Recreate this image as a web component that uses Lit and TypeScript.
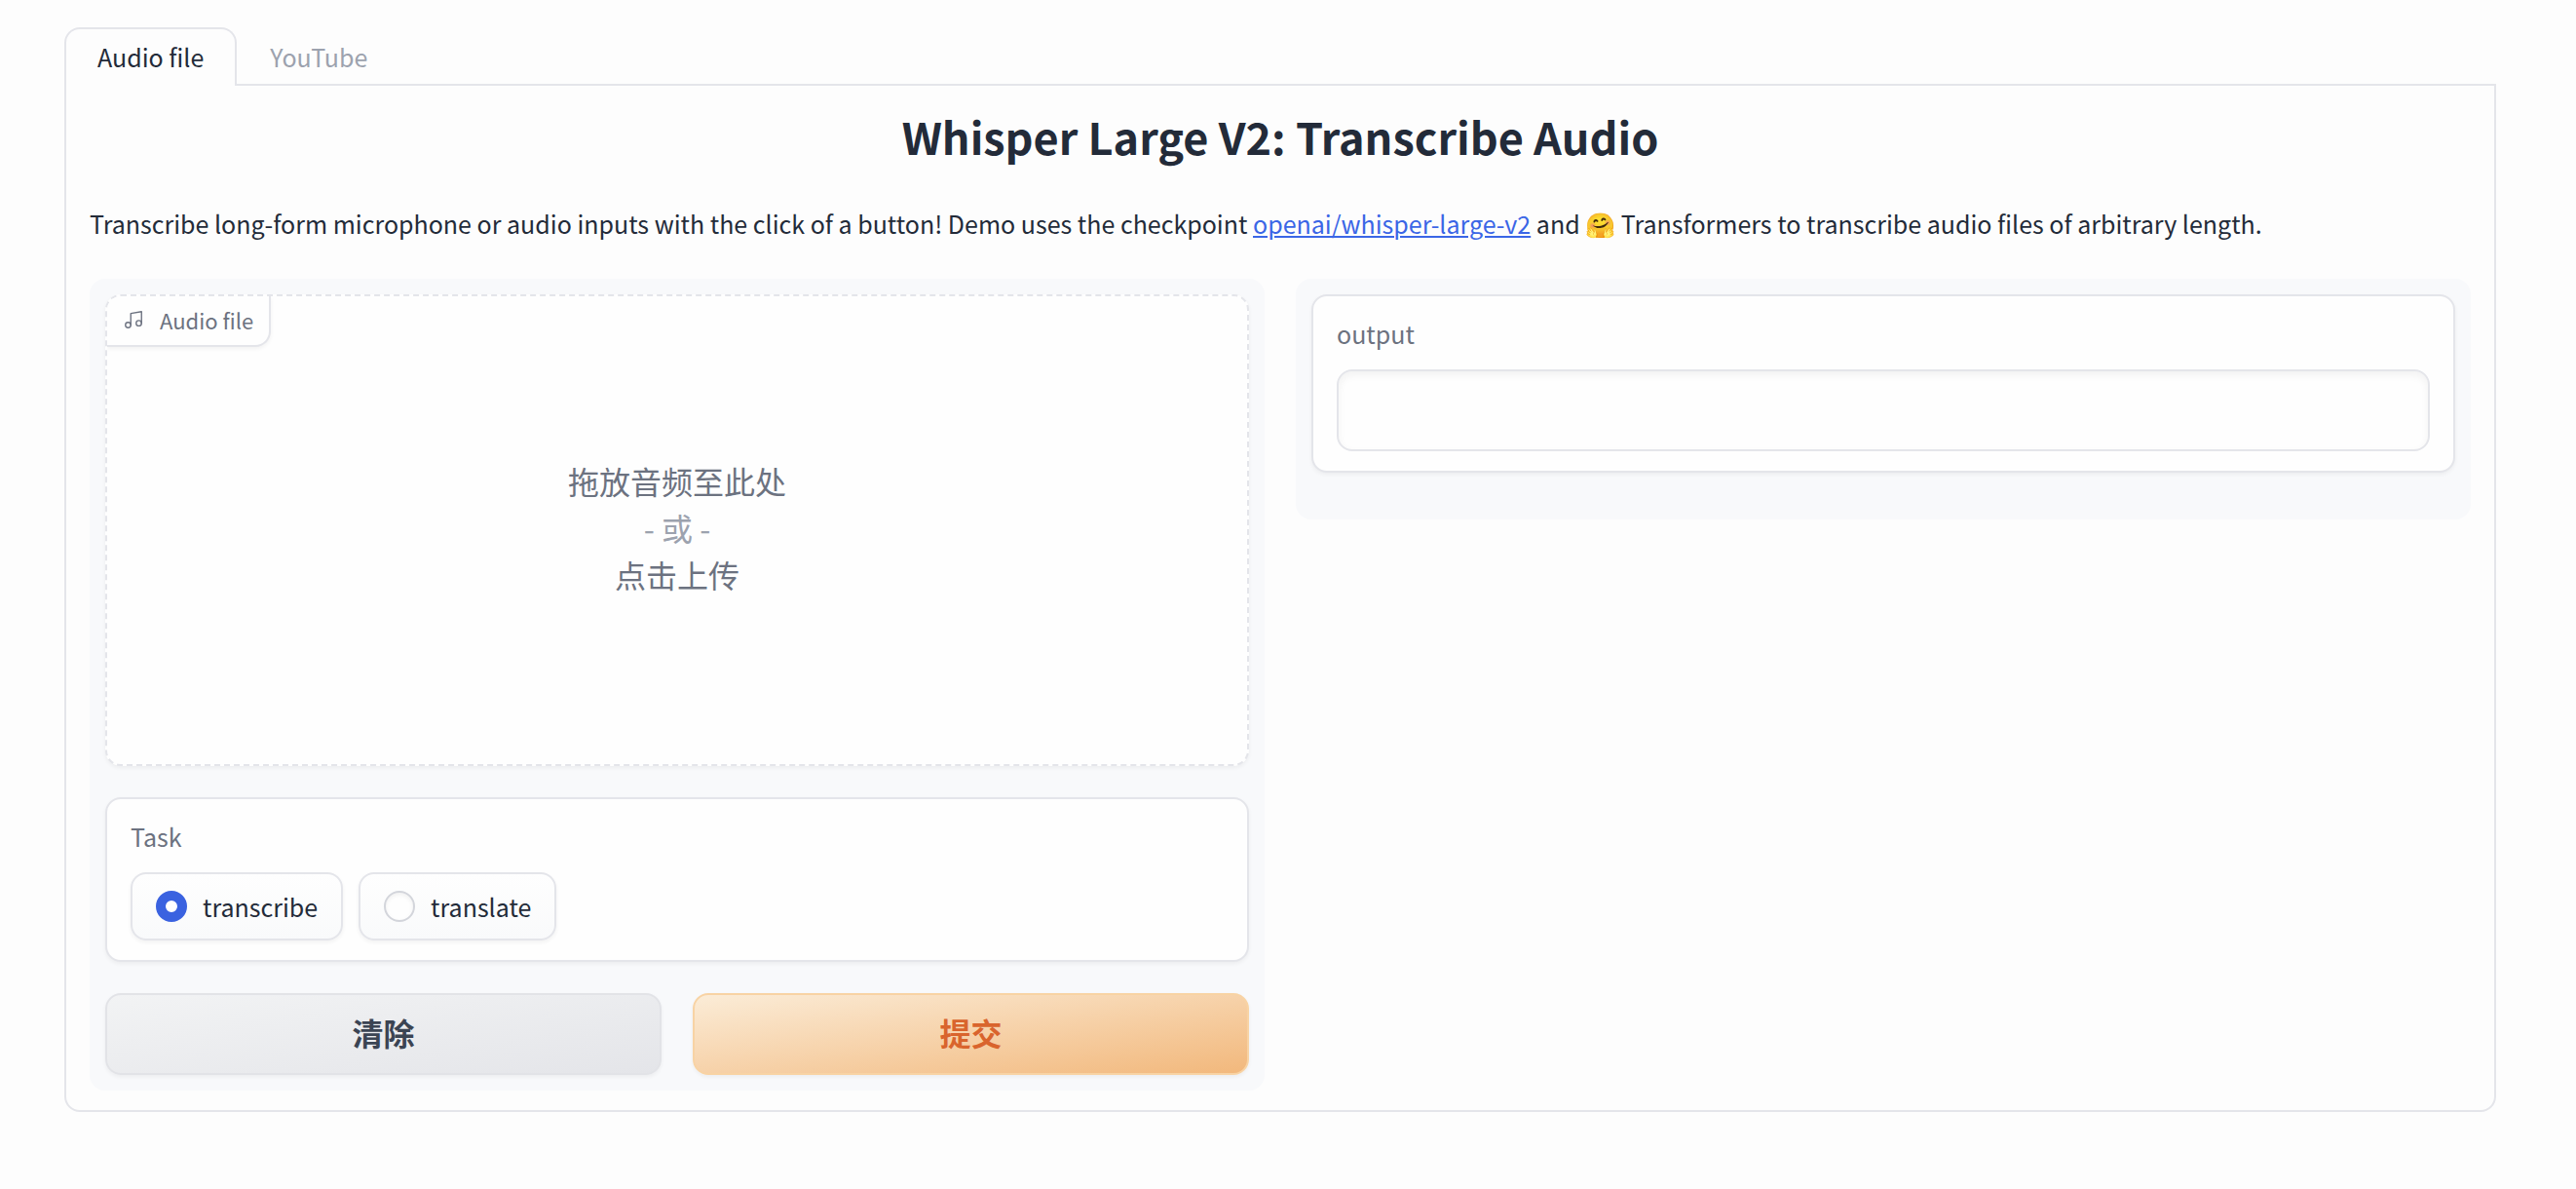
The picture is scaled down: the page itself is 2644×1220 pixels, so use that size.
import { LitElement, html, css, svg } from "lit";
import { customElement, state } from "lit/decorators.js";
import { classMap } from "lit/directives/class-map.js";

const TABS = ["Audio file", "YouTube"];
const TASKS = ["transcribe", "translate"];

const musicIcon = svg`
  <svg class="icon" viewBox="0 0 24 24" fill="none" stroke="currentColor" stroke-width="1.5"
    stroke-linecap="round" stroke-linejoin="round" aria-hidden="true">
    <path d="M9 18V5l12-2v13"></path>
    <circle cx="6" cy="18" r="3"></circle>
    <circle cx="18" cy="16" r="3"></circle>
  </svg>`;

@customElement("app-root")
export class AppRoot extends LitElement {
  @state() private tab = TABS[0];
  @state() private task = TASKS[0];

  static styles = css`
    :host {
      --line: #e4e5ea;
      --ink: #232b39;
      --muted: #6c7280;
      --faint: #9ca2ae;
      --card: #fefefe;
      --shadow: 0 2px 4px rgba(0, 0, 0, 0.05);
      display: block;
      box-sizing: border-box;
      min-height: 100vh;
      padding: 28px 82px 80px 66px;
      background: #fdfdfd;
      color: var(--ink);
      font-family: "Noto Sans CJK SC", sans-serif;
      font-size: 25px;
      line-height: 36px;
    }
    *,
    *::before {
      box-sizing: border-box;
    }
    button,
    input {
      font: inherit;
      color: inherit;
      margin: 0;
    }
    button {
      cursor: pointer;
    }
    .tabs {
      display: flex;
      position: relative;
      margin-bottom: -2px;
    }
    .tab {
      border: 2px solid transparent;
      border-bottom: 0;
      border-radius: 16px 16px 0 0;
      padding: 10px 32px 12px;
      background: transparent;
      color: var(--faint);
    }
    .tab.selected {
      border-color: var(--line);
      background: #fdfdfd;
      color: var(--ink);
    }
    .page {
      border: 2px solid var(--line);
      border-radius: 0 0 16px 16px;
      padding: 22px 24px 20px;
    }
    h1 {
      margin: 0 0 38px;
      font-size: 45px;
      line-height: 60px;
      font-weight: 700;
      text-align: center;
    }
    p {
      margin: 0 0 36px;
      line-height: 42px;
    }
    a {
      color: #3b66e6;
      text-decoration: underline;
      text-decoration-thickness: 2px;
      text-underline-offset: 2px;
    }
    .columns {
      display: grid;
      grid-template-columns: 1fr 1fr;
      align-items: start;
      gap: 32px;
    }
    .column {
      display: flex;
      flex-direction: column;
      gap: 32px;
      padding: 16px;
      border-radius: 16px;
      background: #f8f9fb;
    }
    .column.result {
      padding-bottom: 48px;
    }
    .block {
      margin: 0;
      border: 2px solid var(--line);
      border-radius: 16px;
      padding: 20px 24px;
      background: var(--card);
      box-shadow: var(--shadow);
      min-width: 0;
    }
    .block.upload {
      position: relative;
      padding: 0;
      border-style: dashed;
      overflow: hidden;
    }
    .tag {
      position: absolute;
      top: 0;
      left: 0;
      display: flex;
      align-items: center;
      gap: 16px;
      padding: 8px 16px 10px;
      border: solid var(--line);
      border-width: 0 2px 2px 0;
      border-radius: 0 0 16px 0;
      background: var(--card);
      box-shadow: var(--shadow);
      color: var(--muted);
      font-size: 22px;
      line-height: 32px;
    }
    .icon {
      width: 22px;
      height: 22px;
    }
    .drop {
      display: block;
      width: 100%;
      min-height: 480px;
      border: 0;
      padding: 0 0 6px;
      background: transparent;
      color: var(--muted);
      font-size: 32px;
      line-height: 48px;
    }
    .or {
      color: var(--faint);
    }
    .caption {
      display: block;
      margin-bottom: 19px;
      color: var(--muted);
    }
    .options {
      display: flex;
      flex-wrap: wrap;
      gap: 16px;
    }
    .option {
      display: flex;
      align-items: center;
      gap: 16px;
      border: 2px solid var(--line);
      border-radius: 16px;
      padding: 15px 24px;
      background: linear-gradient(to bottom, #fefefe, #f9fafb);
      box-shadow: var(--shadow);
      cursor: pointer;
    }
    .radio {
      appearance: none;
      width: 32px;
      height: 32px;
      border: 2px solid #d3d5db;
      border-radius: 50%;
      background: var(--card);
      box-shadow: inset 0 2px 4px rgba(0, 0, 0, 0.06);
    }
    .radio:checked {
      border: 10px solid #3a62e0;
      background: #ffffff;
      box-shadow: none;
    }
    .text {
      display: block;
      width: 100%;
      height: 84px;
      border: 2px solid var(--line);
      border-radius: 16px;
      padding: 20px;
      background: var(--card);
      box-shadow: inset 0 4px 8px rgba(0, 0, 0, 0.05);
    }
    .actions {
      display: grid;
      grid-template-columns: 1fr 1fr;
      gap: 32px;
    }
    .action {
      border: 2px solid #e2e3e7;
      border-radius: 16px;
      padding: 14px 24px 18px;
      background: linear-gradient(to bottom right, #f2f3f4, #e4e5e9);
      box-shadow: var(--shadow);
      color: #3b4453;
      font-size: 32px;
      line-height: 48px;
      font-weight: 700;
    }
    .action.primary {
      border-color: #f8d3a4;
      background: linear-gradient(to bottom right, #fbecd7, #f2b87c);
      color: #d9642d;
    }
  `;

  render() {
    return html`
      <div class="tabs" role="tablist">
        ${TABS.map(
          (name) => html`<button
            type="button"
            role="tab"
            class=${classMap({ tab: true, selected: name === this.tab })}
            aria-selected=${name === this.tab ? "true" : "false"}
            @click=${() => (this.tab = name)}
          >${name}</button>`
        )}
      </div>
      <main class="page">
        <h1>Whisper Large V2: Transcribe Audio</h1>
        <p>
          Transcribe long-form microphone or audio inputs with the click of a button! Demo uses the checkpoint
          <a href="https://huggingface.co/openai/whisper-large-v2">openai/whisper-large-v2</a>
          and 🤗 Transformers to transcribe audio files of arbitrary length.
        </p>
        <div class="columns">
          <section class="column">
            <div class="block upload">
              <button type="button" class="drop" id="drop">
                拖放音频至此处<br /><span class="or">- 或 -</span><br />点击上传
              </button>
              <label class="tag" for="drop">${musicIcon}<span>Audio file</span></label>
            </div>
            <div class="block" role="radiogroup" aria-labelledby="task">
              <span class="caption" id="task">Task</span>
              <div class="options">
                ${TASKS.map(
                  (name) => html`<label class="option">
                    <input
                      class="radio"
                      type="radio"
                      name="task"
                      .value=${name}
                      .checked=${name === this.task}
                      @change=${() => (this.task = name)}
                    />
                    <span>${name}</span>
                  </label>`
                )}
              </div>
            </div>
            <div class="actions">
              <button type="button" class="action">清除</button>
              <button type="button" class="action primary">提交</button>
            </div>
          </section>
          <section class="column result">
            <div class="block">
              <label class="caption" for="output">output</label>
              <input class="text" id="output" type="text" />
            </div>
          </section>
        </div>
      </main>
    `;
  }
}
